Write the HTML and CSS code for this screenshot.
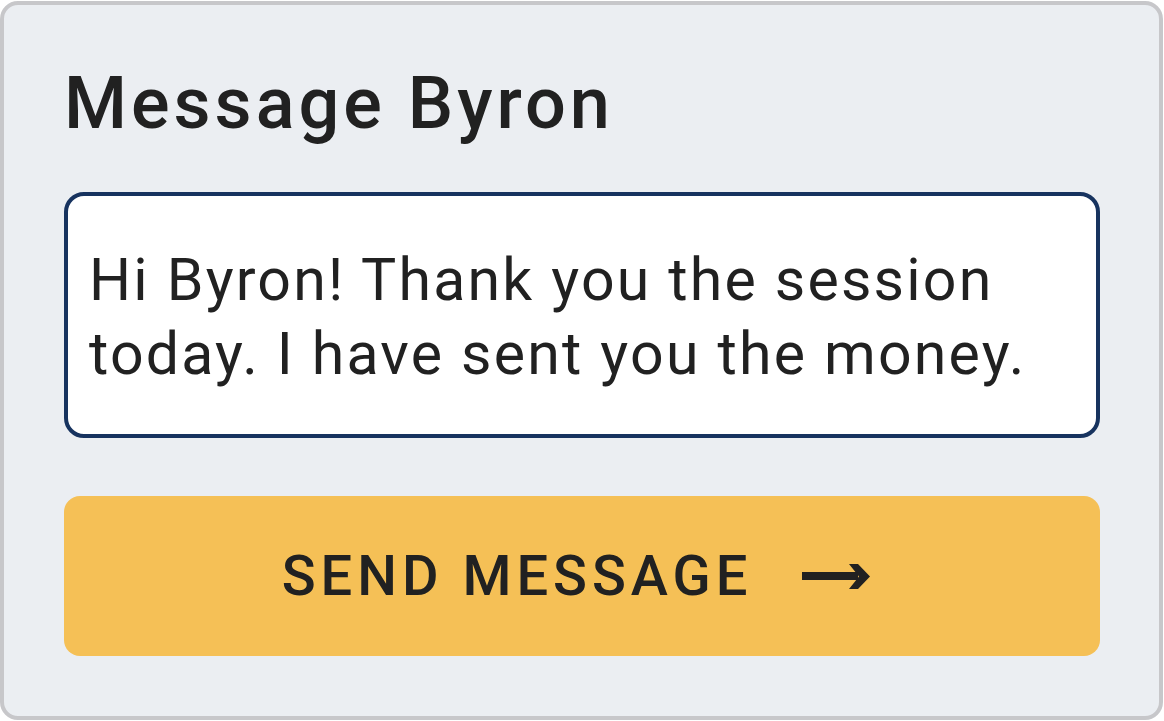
FILE: index.html
```html
<!DOCTYPE html>
<html lang="en">
<head>
  <meta charset="UTF-8" />
  <meta name="viewport" content="width=device-width, initial-scale=1.0"/>
  <title>Message Byron</title>
  <link rel="stylesheet" href="styles.css">
</head>
<body>
  <div class="card">
    <h1 class="title">Message Byron</h1>
    <textarea class="message" rows="2">Hi Byron! Thank you the session today. I have sent you the money.</textarea>
    <button class="send">
      <span class="send-label">SEND MESSAGE</span>
      <svg class="arrow" width="68" height="25" viewBox="0 0 68 25">
        <rect x="0" y="8" width="56" height="8" fill="#212121"/>
        <polygon points="47,0 56,0 68,12.5 56,25 47,25 57,12.5" fill="#212121"/>
      </svg>
    </button>
  </div>
</body>
</html>
```

FILE: styles.css
```css
* {
  box-sizing: border-box;
}

body {
  margin: 0;
  padding: 1px 1px 1px 0;
  font-family: Roboto, 'Liberation Sans', sans-serif;
  color: #212121;
  background: #ffffff;
}

.card {
  height: 719px;
  display: flex;
  flex-direction: column;
  background: #ebeef2;
  border: 4px solid #c7c7ca;
  border-radius: 18px;
  padding: 63px 59px 0 60px;
}

.title {
  margin: 0 0 52px;
  font-size: 72px;
  font-weight: 500;
  line-height: 1;
  letter-spacing: 4px;
}

.message {
  display: block;
  width: 100%;
  height: 246px;
  margin: 0;
  padding: 47px 16px 0 21px;
  border: 4px solid #17335f;
  border-radius: 20px;
  background: #ffffff;
  color: #212121;
  font-family: inherit;
  font-size: 59px;
  line-height: 74px;
  letter-spacing: 2.2px;
  resize: none;
  overflow: hidden;
  outline: none;
}

.send {
  display: flex;
  align-items: center;
  justify-content: center;
  gap: 50px;
  width: 100%;
  height: 160px;
  margin-top: 58px;
  padding: 0 12px 0 0;
  border: none;
  border-radius: 16px;
  background: #f5c056;
  color: #212121;
  font-family: inherit;
  cursor: pointer;
}

.send-label {
  font-size: 56px;
  font-weight: 500;
  letter-spacing: 5px;
}

.arrow {
  display: block;
}
```
